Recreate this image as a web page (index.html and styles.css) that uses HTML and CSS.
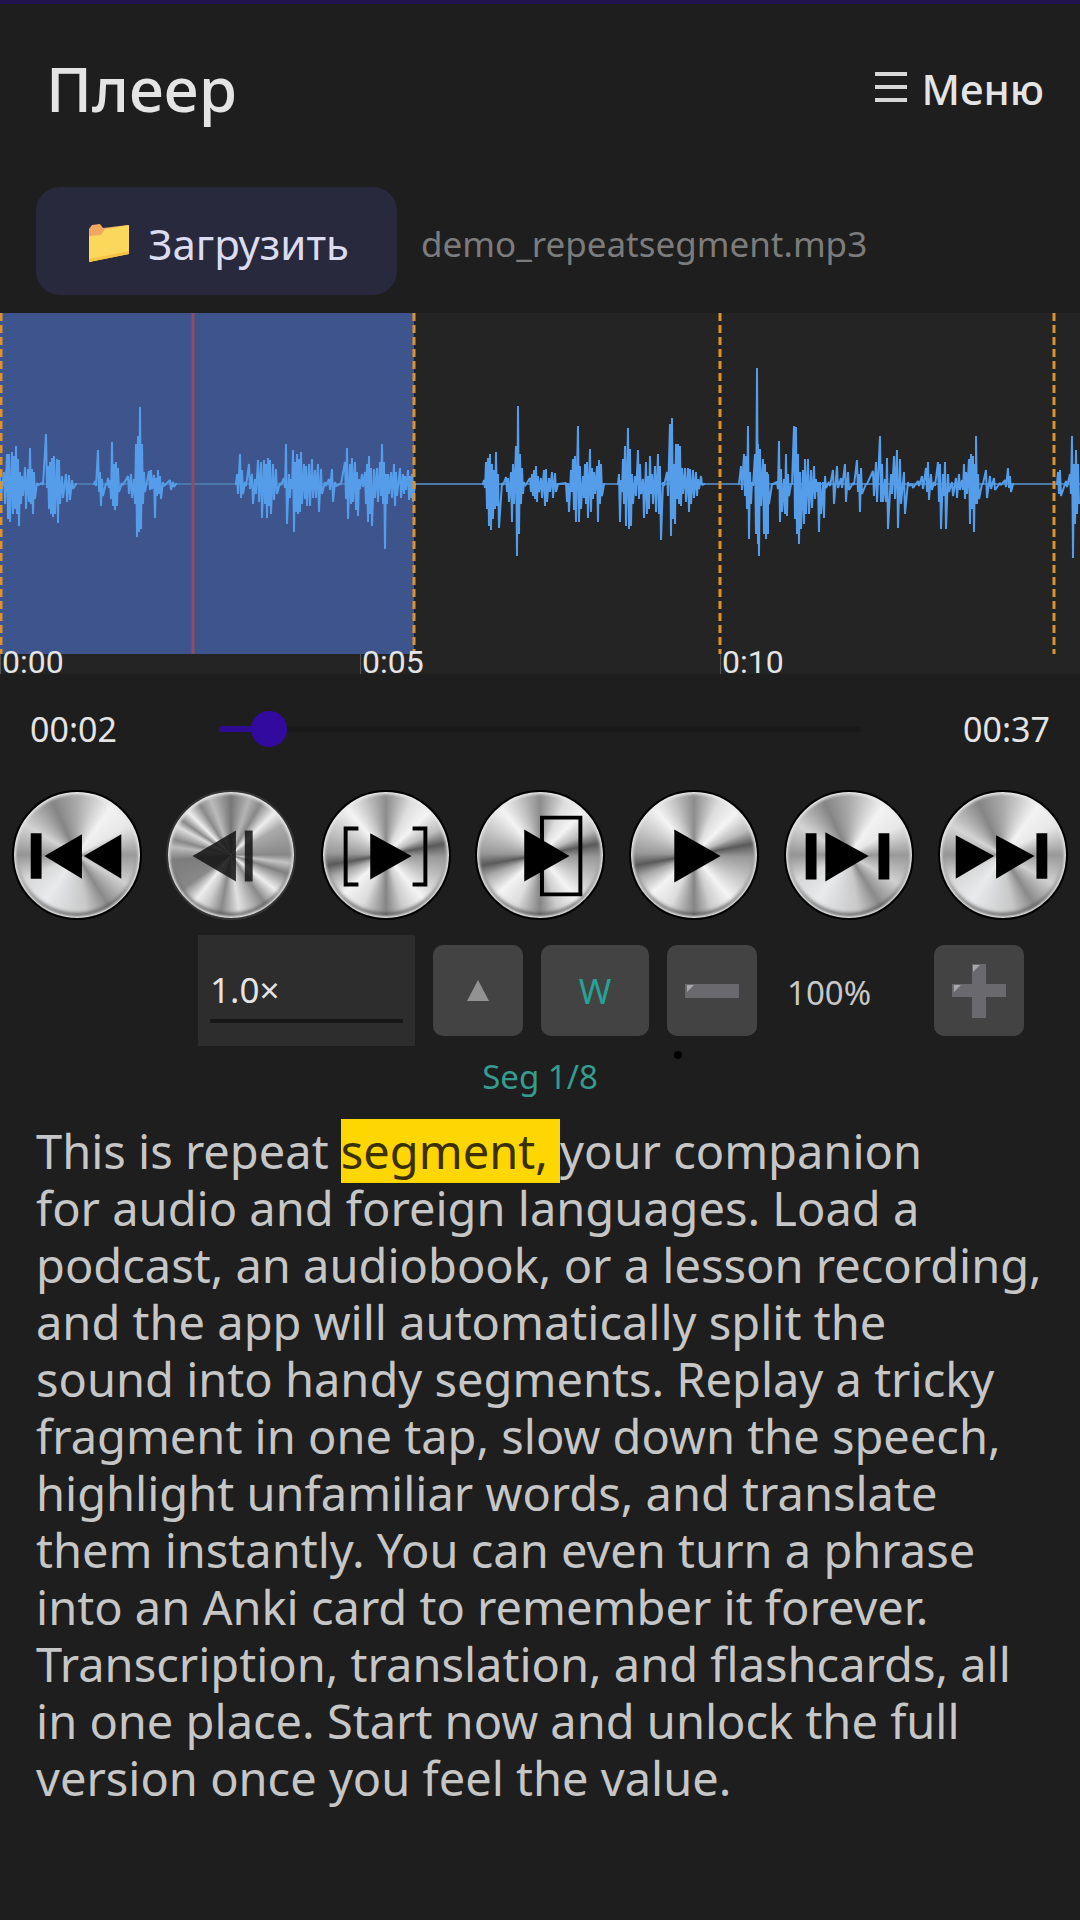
FILE: index.html
```
<!DOCTYPE html>
<html lang="ru">
<head>
    <meta charset="utf-8" />
    <meta name="viewport" content="width=device-width, initial-scale=1" />
    <title>Плеер</title>
    <link rel="stylesheet" href="styles.css">
</head>
<body>
    <header class="header">
        <h1 class="title">Плеер</h1>
        <button class="menu" type="button">
            <svg width="32" height="36" viewBox="0 0 32 36" aria-hidden="true">
                <path d="M0 4h32M0 17h32M0 30h32" stroke="#d8d8d8" stroke-width="4" />
            </svg>
            Меню
        </button>
    </header>

    <div class="file">
        <button class="load" type="button">
            <svg width="42" height="40" viewBox="0 0 42 40" aria-hidden="true">
                <path d="M1 6L4 2 12 1 15 5 40 2V30L1 39Z" fill="#f0a860" />
                <path d="M1 13L13 12 17 6 41 2V31L1 39Z" fill="#fbd75b" />
                <path d="M1 36L41 28V31L1 39Z" fill="#f5c542" />
            </svg>
            Загрузить
        </button>
        <span class="filename">demo_repeatsegment.mp3</span>
    </div>

    <!--осциллограмма-->
    <div class="wave">
        <svg class="wave-svg" viewBox="0 0 1080 341" preserveAspectRatio="none" aria-hidden="true">
            <rect width="414" height="341" fill="#3d548d" />
            <path d="M0 171H1080" stroke="#4a78a8" stroke-width="2" />
            <path id="peaks" fill="none" stroke="#559de8" stroke-width="2" stroke-linejoin="bevel" />
            <path d="M193 0V341" stroke="#934a64" stroke-width="3" />
            <path d="M1 0V341M414 0V341M720 0V341M1054 0V341" stroke="#dc932f" stroke-width="3" stroke-dasharray="8 4" />
        </svg>
        <div class="scale">
            <span>0:00</span>
            <span>0:05</span>
            <span>0:10</span>
        </div>
    </div>

    <div class="progress">
        <span class="time">00:02</span>
        <input class="seek" type="range" min="0" max="37" value="2" aria-label="Позиция" />
        <span class="time">00:37</span>
    </div>

    <!--кнопки управления-->
    <div class="controls">
        <button class="knob" type="button" aria-label="В начало">
            <svg viewBox="0 0 128 128"><path d="M17 42h11v46H17zM31 65L69 43v45zM71 65l38-22v45z" /></svg>
        </button>
        <button class="knob knob-off" type="button" aria-label="Предыдущий">
            <svg viewBox="0 0 128 128"><path d="M25 65L69 39v52zM78 39h8v52h-8z" /></svg>
        </button>
        <button class="knob knob-dark" type="button" aria-label="Сегмент">
            <svg viewBox="0 0 128 128"><path d="M48 42L90 65 48 89z" /><path class="line" d="M36 37H23v57h13M91 37h13v57H91" /></svg>
        </button>
        <button class="knob knob-dark" type="button" aria-label="До конца сегмента">
            <svg viewBox="0 0 128 128"><path d="M48 38L94 65 48 91z" /><path class="line" d="M66 26h39v78H66z" /></svg>
        </button>
        <button class="knob knob-dark" type="button" aria-label="Играть">
            <svg viewBox="0 0 128 128"><path d="M44 38L91 65 44 92z" /></svg>
        </button>
        <button class="knob" type="button" aria-label="Следующий">
            <svg viewBox="0 0 128 128"><path d="M20 42h11v47H20zM40 41L84 65 40 91zM94 42h11v47H94z" /></svg>
        </button>
        <button class="knob" type="button" aria-label="В конец">
            <svg viewBox="0 0 128 128"><path d="M16 44L55 65 16 88zM57 44L96 65 57 88zM98 42h11v46H98z" /></svg>
        </button>
    </div>

    <div class="options">
        <div class="speed">
            <select class="speed-select" aria-label="Скорость">
                <option>1.0×</option>
            </select>
        </div>
        <button class="opt" type="button" aria-label="Выше">
            <svg width="22" height="22" viewBox="0 0 22 22"><path d="M11 0L22 21H0z" fill="#929292" /></svg>
        </button>
        <button class="opt opt-word" type="button">W</button>
        <button class="opt" type="button" aria-label="Меньше">
            <svg width="54" height="54" viewBox="0 0 54 54">
                <path d="M0 20h54v14H0z" fill="#69696e" />
                <path d="M2 21h7l-7 7z" fill="#a8a8aa" />
            </svg>
        </button>
        <span class="zoom">100%</span>
        <button class="opt" type="button" aria-label="Больше">
            <svg width="54" height="54" viewBox="0 0 54 54">
                <path d="M20 0h14v20h20v13H34v21H20V33H0V20h20z" fill="#69696e" />
                <path d="M21 1h7l-7 7zM2 21h7l-7 7z" fill="#a8a8aa" />
            </svg>
        </button>
    </div>

    <div class="seg">Seg 1/8</div>

    <p class="text">This is repeat <mark>segment, </mark>your companion<br>
        for audio and foreign languages. Load a podcast, an audiobook, or a lesson recording, and the app will automatically split the<br>
        sound into handy segments. Replay a tricky fragment in one tap, slow down the speech, highlight unfamiliar words, and translate them instantly. You can even turn a phrase into an Anki card to remember it forever. Transcription, translation, and flashcards, all in one place. Start now and unlock the full version once you feel the value.</p>

    <script src="wave.js"></script>
</body>
</html>
```
FILE: styles.css
```
* {
    box-sizing: border-box;
    margin: 0;
    padding: 0
}

body {
    background-color: #1e1e1e;
    border-top: 4px solid #21134f;
    color: #e4e4e4;
    font-family: "Noto Sans", "Open Sans", sans-serif;
}

button,
select {
    border: 0;
    color: inherit;
    font-family: inherit;
    cursor: pointer;
}

svg {
    display: block;
}

.header {
    display: flex;
    justify-content: space-between;
    align-items: center;
    height: 168px;
    padding: 0 36px 0 46px;
}

.title {
    font-size: 62px;
    font-weight: 500;
}

.menu {
    display: flex;
    align-items: center;
    gap: 14px;
    background: none;
    font-size: 42px;
    font-weight: 500;
}

.file {
    display: flex;
    align-items: center;
    gap: 24px;
    padding: 15px 36px 18px;
}

.load {
    display: flex;
    align-items: center;
    justify-content: center;
    gap: 18px;
    width: 361px;
    height: 108px;
    padding: 4px 0 0 4px;
    border-radius: 24px;
    background-color: #29293d;
    color: #dcdcf0;
    font-size: 42px;
}

.filename {
    padding-top: 4px;
    color: #7c7c7c;
    font-size: 35px;
}

.wave {
    background-color: #242424;
}

.wave-svg {
    width: 100%;
    height: 341px;
}

/* одно деление = 5 секунд */
.scale {
    display: grid;
    grid-template-columns: repeat(3, 1fr);
    height: 20px;
}

    .scale span {
        padding-left: 1px;
        border-left: 1px solid #555;
        font-family: Roboto, sans-serif;
        font-size: 32px;
        line-height: 16px;
    }

.progress {
    display: flex;
    align-items: center;
    justify-content: space-between;
    padding: 30px 30px 36px;
}

.time {
    font-size: 34px;
    line-height: 50px;
}

.seek {
    appearance: none;
    width: 63%;
    height: 36px;
    background: none;
}

    .seek::-webkit-slider-runnable-track {
        height: 6px;
        border-radius: 3px;
        background: linear-gradient(to right, #2e0c92 8%, #191919 8%);
    }

    .seek::-webkit-slider-thumb {
        appearance: none;
        width: 36px;
        height: 36px;
        margin-top: -15px;
        border-radius: 50%;
        background-color: #330a9e;
    }

.controls {
    display: grid;
    grid-template-columns: repeat(7, 1fr);
    justify-items: center;
}

.knob {
    width: 130px;
    height: 130px;
    border: 2px solid #000;
    border-radius: 50%;
    background: conic-gradient(#aaa, #f2f2f2 35deg, #e8e8e8 60deg, #999 90deg, #d0d0d0 120deg, #8a8a8a 148deg, #c8c8c8 170deg, #e8eaec 215deg, #d8d8d8 245deg, #959595 270deg, #d4d4d4 300deg, #858585 335deg, #aaa);
    box-shadow: inset 0 0 3px 2px #ececec, inset 0 -4px 4px #333;
}

    .knob .line {
        fill: none;
        stroke: #000;
        stroke-width: 4;
    }

.knob-dark {
    background: conic-gradient(#8c8c8c, #ddd 25deg, #f4f4f4 45deg, #bbb 65deg, #5a5a5a 79deg, #999 92deg, #c4c4c4 115deg, #f4f4f4 140deg, #ccc 162deg, #858585 180deg, #ddd 205deg, #f4f4f4 228deg, #aaa 248deg, #5a5a5a 260deg, #999 272deg, #bbb 290deg, #f4f4f4 320deg, #c4c4c4 340deg, #8c8c8c);
}

.knob-off {
    border-color: #333;
    background: conic-gradient(#777, #b4b4b4 18deg, #888 30deg, #eee 46deg, #aaa 60deg, #888 90deg, #c4c4c4 98deg, #808080 108deg, #eee 128deg, #8a8a8a 145deg, #ccc 165deg, #e0e0e0 172deg, #8a8a8a 190deg, #ccc 205deg, #eee 218deg, #888 235deg, #7c7c7c 265deg, #bbb 278deg, #888 285deg, #ddd 298deg, #8a8a8a 305deg, #eee 315deg, #8a8a8a 328deg, #bbb 340deg, #777);
}

    .knob-off path {
        fill: #111;
        opacity: .85;
    }

.options {
    display: flex;
    align-items: center;
    justify-content: flex-end;
    gap: 18px;
    padding: 15px 56px 0;
}

.speed {
    width: 217px;
    padding: 12px 12px 23px;
    background-color: #2d2d2d;
}

.speed-select {
    appearance: none;
    width: 100%;
    height: 76px;
    padding-top: 12px;
    border-bottom: 4px solid #171717;
    background: none;
    font-size: 35px;
}

.opt {
    display: flex;
    align-items: center;
    justify-content: center;
    width: 90px;
    height: 91px;
    border-radius: 10px;
    background-color: #434343;
}

.opt-word {
    width: 108px;
    color: #26a395;
    font-size: 35px;
}

.zoom {
    width: 141px;
    padding: 4px 0 0 12px;
    color: #c8c8c8;
    font-size: 33px;
}

.seg {
    position: relative;
    padding: 8px 0;
    color: #359c8e;
    font-size: 33px;
    line-height: 46px;
    text-align: center;
}

    /* точка под кнопкой минус */
    .seg::after {
        content: "";
        position: absolute;
        top: 5px;
        left: 674px;
        width: 8px;
        height: 8px;
        border-radius: 50%;
        background-color: #000;
    }

.text {
    padding: 15px 36px;
    color: #c6c6c6;
    font-size: 47px;
    line-height: 57px;
}

    .text mark {
        background-color: #fed602;
        color: #3a3000;
    }
```
FILE: wave.js
```
//пики: x, вверх, вниз от средней линии
var peaks = [
    [0,10,12],[4,12,20],[7,30,35],[9,30,38],[12,32,30],[14,28,25],[16,38,30],[18,25,42],[20,12,20],[22,8,12],[25,17,25],[28,15,18],[30,36,20],[32,15,30],[34,12,15],[37,1,1],
    [42,1,1],[46,50,4],[48,18,25],[50,22,30],[52,26,33],[54,28,30],[57,25,39],[59,24,20],[62,8,14],[66,10,18],[69,9,16],[72,4,5],[76,0,0],
    [93,0,0],[95,3,2],[98,34,8],[100,12,22],[102,5,12],[106,1,1],[108,6,4],[110,4,15],[112,42,22],[114,20,26],[116,22,22],[118,16,8],[122,1,1],[128,8,10],[131,10,14],[134,5,20],[136,40,53],[138,48,48],[140,77,45],[142,40,20],[144,12,8],[149,13,6],[151,14,5],[154,9,34],[156,6,12],[158,14,10],[160,8,15],[163,2,2],[170,4,6],[173,2,3],[176,0,0],
    [235,0,0],[237,10,10],[240,30,14],[242,14,10],[245,2,2],[249,20,5],[252,10,20],[255,5,10],[258,24,18],[261,22,34],[264,24,20],[266,20,34],[268,26,22],[270,24,30],[273,20,16],[276,15,10],[280,1,1],[284,6,4],[286,40,40],[289,10,14],[291,5,5],[293,34,48],[295,22,28],[297,30,30],[299,25,28],[301,32,20],[304,20,15],[306,18,22],[309,20,22],[312,25,14],[315,14,14],[318,20,28],[321,15,10],[325,2,2],[329,5,6],[332,15,18],[335,2,2],[340,0,0],
    [345,22,15],[347,36,35],[350,20,20],[352,26,18],[355,22,26],[357,12,32],[359,5,5],[362,10,3],[365,12,20],[367,20,38],[369,28,30],[371,16,42],[374,15,14],[377,16,18],[380,22,12],[382,40,20],[384,22,65],[386,10,20],[388,10,10],[391,12,14],[394,20,22],[396,12,12],[400,16,14],[403,10,10],[405,8,6],[408,14,16],[410,8,14],[412,10,18],[415,0,0],
    [482,0,0],[484,4,4],[486,22,25],[488,26,42],[490,30,46],[492,20,35],[494,14,25],[496,32,22],[498,10,44],[502,1,1],[506,7,8],[508,6,18],[511,12,38],[513,20,20],[516,38,72],[518,78,50],[520,30,20],[522,16,10],[524,2,2],[530,6,8],[532,10,12],[534,14,15],[536,18,18],[538,8,8],[541,6,14],[544,14,22],[546,15,18],[549,6,8],[552,12,14],[555,11,8],[558,0,0],
    [566,1,18],[568,1,28],[571,14,8],[573,25,26],[575,28,38],[578,58,38],[580,18,25],[583,8,14],[585,20,20],[587,22,34],[590,35,28],[592,16,15],[594,12,10],[597,18,38],[599,24,20],[601,20,12],[604,0,0],
    [617,0,0],[619,10,38],[621,4,8],[623,25,20],[625,38,42],[628,56,45],[630,35,42],[632,10,20],[635,8,12],[638,34,15],[640,20,10],[643,5,34],[646,22,30],[648,8,25],[650,28,10],[652,10,20],[655,18,28],[658,30,30],[660,18,56],[663,2,2],[667,12,12],[670,60,52],[672,66,35],[674,20,40],[676,40,15],[678,40,20],[680,38,22],[682,16,10],[685,16,18],[688,16,28],[690,15,20],[693,14,14],[696,12,12],[698,5,5],[701,8,1],[704,0,0],
    [738,0,0],[741,18,6],[744,30,12],[746,28,25],[748,58,55],[750,12,20],[752,2,2],[755,30,50],[757,116,60],[758,40,72],[760,35,22],[763,25,50],[765,20,55],[767,12,50],[768,10,20],[772,0,0],[777,2,5],[779,43,38],[781,15,28],[784,5,30],[786,30,32],[788,10,12],[791,0,0],[794,58,35],[796,57,50],[798,30,60],[800,12,45],[803,14,40],[805,25,30],[808,25,30],[811,14,24],[814,18,15],[816,5,8],[818,2,48],[820,2,30],[823,2,34],[825,8,4],[829,2,2],
    [833,14,20],[837,18,4],[841,6,4],[845,20,18],[848,12,6],[853,1,1],[857,24,8],[859,10,28],[861,16,10],[866,0,0],[873,13,12],[876,22,18],[880,48,18],[882,20,18],[885,5,18],[887,26,45],[891,10,10],[894,28,15],[897,34,44],[900,25,20],[904,12,30],[908,2,2],[912,0,4],[918,3,2],[922,8,5],[926,16,8],[928,22,16],[931,10,6],[934,2,2],
    [938,22,18],[940,20,45],[943,10,12],[945,22,45],[948,10,8],[952,2,12],[956,6,14],[959,10,6],[962,4,6],[964,20,15],[966,12,10],[969,25,40],[971,30,25],[973,28,48],[975,20,20],[976,48,20],[978,10,15],[982,0,0],[986,14,14],[990,8,5],[994,6,6],[1000,1,1],[1005,4,3],[1008,16,4],[1010,8,8],[1013,0,0],
    [1056,0,0],[1058,12,10],[1060,14,12],[1066,3,3],[1070,10,10],[1072,48,74],[1074,20,40],[1076,34,30],[1078,20,20]
];
var middle = 171;
var d = "";
for (var i = 0; i < peaks.length; i++) {
    var x = peaks[i][0];
    //на тишине линию не рисуем
    var pen = i == 0 || x - peaks[i - 1][0] > 12 ? "M" : "L";
    d += pen + x + " " + (middle - peaks[i][1]) + "L" + (x + 1) + " " + (middle + peaks[i][2]);
}
document.getElementById("peaks").setAttribute("d", d);
```
